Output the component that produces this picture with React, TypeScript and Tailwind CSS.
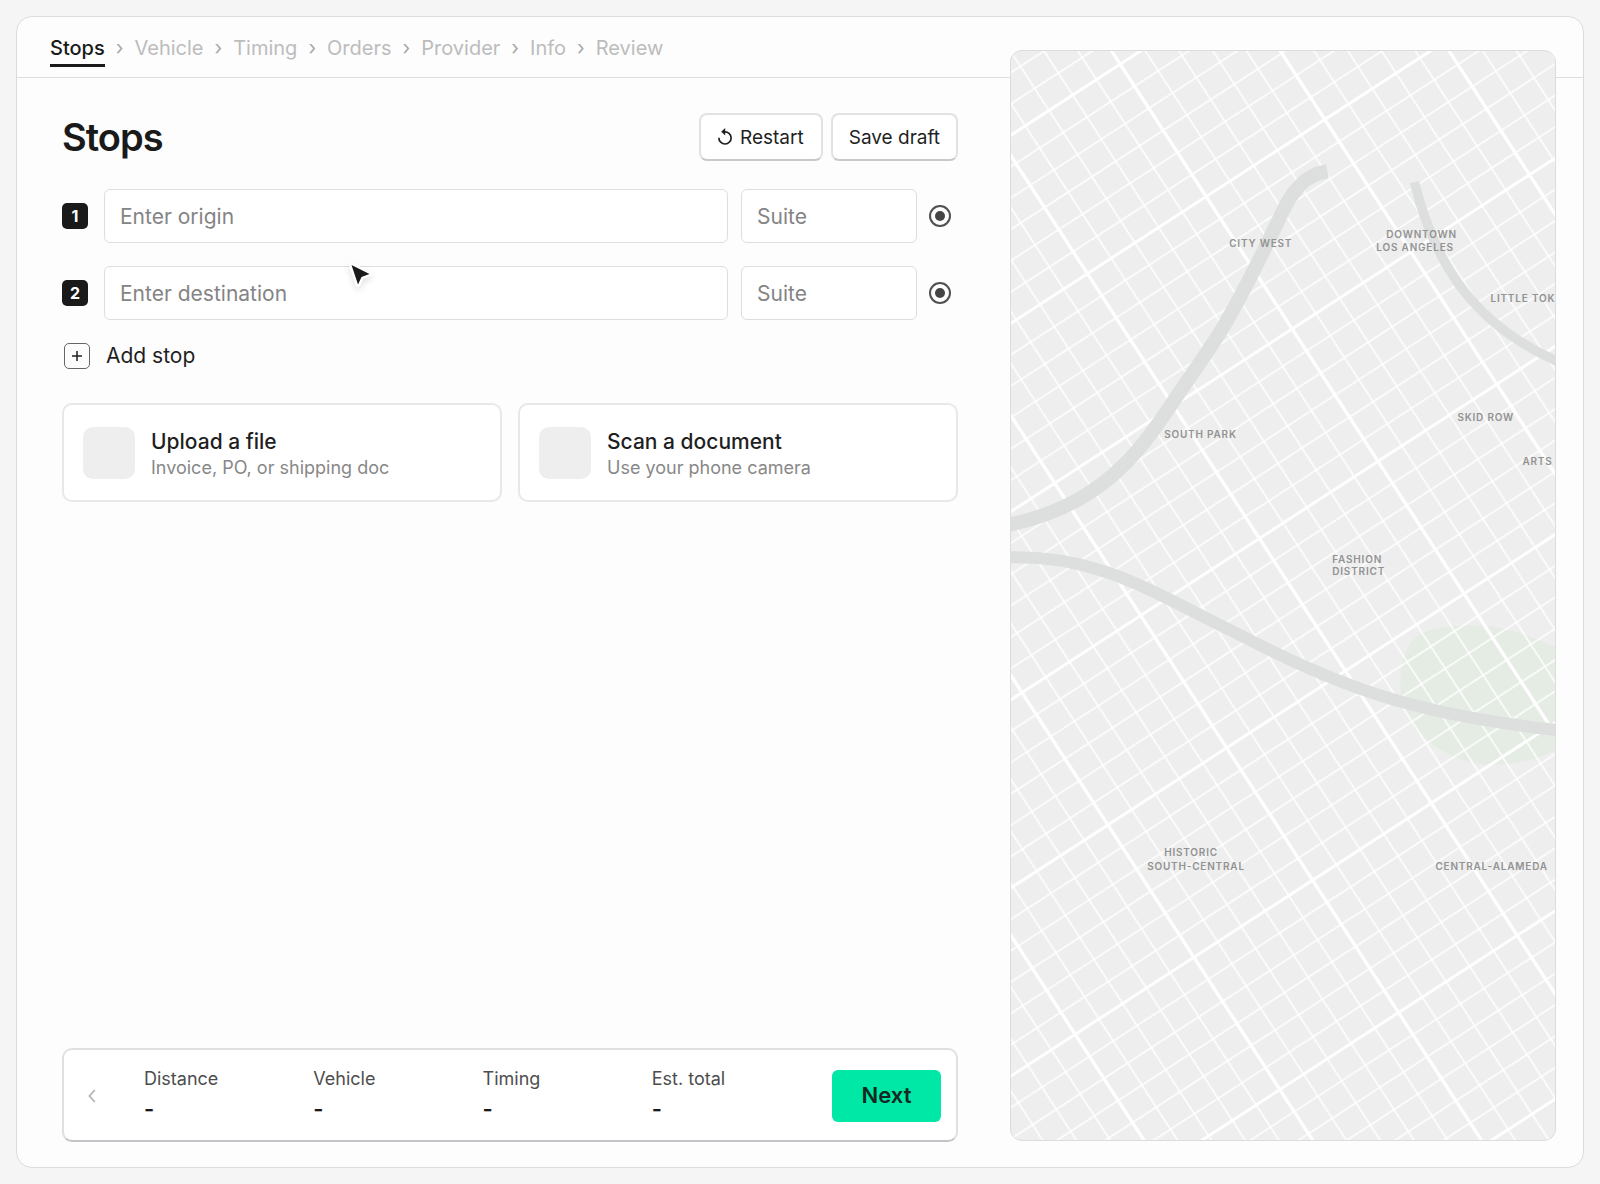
import { Fragment } from "react";
import clsx from "clsx";

const steps = ["Stops", "Vehicle", "Timing", "Orders", "Provider", "Info", "Review"];

const stops = [
  { id: "origin", placeholder: "Enter origin" },
  { id: "destination", placeholder: "Enter destination" },
];

const importOptions = [
  { title: "Upload a file", hint: "Invoice, PO, or shipping doc" },
  { title: "Scan a document", hint: "Use your phone camera" },
];

const summary = ["Distance", "Vehicle", "Timing", "Est. total"];

const districts = [
  { x: 218, y: 196, name: "CITY WEST" },
  { x: 375, y: 187, name: "DOWNTOWN" },
  { x: 365, y: 200, name: "LOS ANGELES" },
  { x: 479, y: 251, name: "LITTLE TOK" },
  { x: 446, y: 370, name: "SKID ROW" },
  { x: 153, y: 387, name: "SOUTH PARK" },
  { x: 511, y: 414, name: "ARTS" },
  { x: 321, y: 512, name: "FASHION" },
  { x: 321, y: 524, name: "DISTRICT" },
  { x: 153, y: 804, name: "HISTORIC" },
  { x: 136, y: 818, name: "SOUTH-CENTRAL" },
  { x: 424, y: 818, name: "CENTRAL-ALAMEDA" },
];

// every 5th avenue and every 6th street is a wide one
const avenues = Array.from({ length: 39 }, (_, i) => ({
  at: 84.3 + (i - 25) * 28.28,
  wide: i % 5 === 0,
}));
const streets = Array.from({ length: 49 }, (_, i) => ({
  at: 70.5 + (i - 6) * 26.28,
  wide: i % 6 === 0,
}));

const Steps = () => (
  <nav aria-label="Steps">
    <ol className="flex items-center gap-[11px] text-xl leading-6 text-[#bcbcbc]">
      {steps.map((step, i) => (
        <Fragment key={step}>
          {i > 0 && (
            <li aria-hidden="true" className="text-[#a8a8a8]">
              ›
            </li>
          )}
          <li>
            <a
              href={`#${step.toLowerCase()}`}
              className={clsx(
                "block border-b-3 pt-2 pb-1",
                i === 0
                  ? "border-[#1a1a1a] font-medium text-[#1a1a1a]"
                  : "border-transparent"
              )}
            >
              {step}
            </a>
          </li>
        </Fragment>
      ))}
    </ol>
  </nav>
);

const actionButton =
  "h-12 rounded-lg border-2 border-[#e2e2e2] border-b-[#c9c9c9] bg-white pt-0.5 text-[19px] leading-6 text-[#1f1f1f]";

const StopRow = ({
  id,
  index,
  placeholder,
}: {
  id: string;
  index: number;
  placeholder: string;
}) => (
  <div className="flex items-center pr-[7px]">
    <label
      htmlFor={id}
      className="flex size-[26px] items-center justify-center rounded-[5px] bg-[#1a1a1a] text-base leading-6 font-bold text-white"
    >
      {index}
    </label>
    <input
      id={id}
      type="text"
      placeholder={placeholder}
      className="ml-4 h-[54px] min-w-0 flex-1 rounded-md border border-[#dedede] bg-white px-[15px] text-[21px] placeholder:text-[#848484]"
    />
    <input
      type="text"
      aria-label={`Suite for stop ${index}`}
      placeholder="Suite"
      className="ml-[13px] h-[54px] w-44 rounded-md border border-[#dedede] bg-white px-[15px] text-[21px] placeholder:text-[#848484]"
    />
    <input
      type="radio"
      name={`pin-${id}`}
      aria-label={`Pin stop ${index} on the map`}
      defaultChecked
      className="ml-3 size-[22px] appearance-none rounded-full border-2 border-[#505050] bg-[#444] bg-clip-content p-1"
    />
  </div>
);

const StreetMap = () => (
  <svg
    viewBox="0 0 544 1088"
    preserveAspectRatio="xMinYMin slice"
    className="absolute inset-0 h-full w-full"
    role="img"
    aria-label="Map of Los Angeles"
  >
    <path
      d="M389 635C388 600 402 583 418 579C440 573 470 572 490 577C515 582 540 592 560 605V690C530 708 500 716 465 712C425 704 390 675 389 635Z"
      fill="#e4ece4"
    />
    <g transform="rotate(-33)" stroke="#fff">
      {avenues.map(({ at, wide }) => (
        <line
          key={at}
          x1={at}
          x2={at}
          y1={-10}
          y2={1230}
          strokeWidth={wide ? 3.4 : 2}
          opacity={wide ? 0.95 : 0.75}
        />
      ))}
      {streets.map(({ at, wide }) => (
        <line
          key={at}
          x1={-620}
          x2={480}
          y1={at}
          y2={at}
          strokeWidth={wide ? 3 : 2}
          opacity={wide ? 0.95 : 0.75}
        />
      ))}
    </g>
    <g fill="none" stroke="#dcdfde">
      <path
        d="M-6 474C96 455 135 390 163 349C185 316 202 294 216 269C236 234 250 205 264 176C276 150 280 143 289 134C297 125 306 122 316 120"
        strokeWidth="14"
      />
      <path d="M-6 506C85 502 140 540 218 578C330 636 400 663 550 679" strokeWidth="12" />
      <path d="M403 131C424 216 465 275 548 311" strokeWidth="9.6" />
    </g>
    <g fill="#929292" fontSize="10" fontWeight="600" className="tracking-[0.08em]">
      {districts.map(({ x, y, name }) => (
        <text key={name} x={x} y={y}>
          {name}
        </text>
      ))}
    </g>
  </svg>
);

const Cursor = () => (
  <svg
    viewBox="0 0 32 32"
    className="pointer-events-none absolute top-[258px] left-[344px] size-8 drop-shadow-md"
    aria-hidden="true"
  >
    <path
      d="M7.500 7L25.500 16L17.500 19L14 26.500Z"
      fill="#1a1a1a"
      stroke="#fff"
      strokeWidth="5"
      strokeLinejoin="round"
      paintOrder="stroke"
    />
  </svg>
);

export default function App() {
  return (
    <div className="relative flex min-h-screen bg-[#f5f5f5] p-4 font-['Inter',sans-serif] text-[#1f1f1f]">
      <div className="grid flex-1 grid-cols-[26fr_15fr] grid-rows-[auto_1fr] rounded-2xl border border-[#dcdcdc] bg-[#fdfdfd]">
        <header className="col-span-2 col-start-1 row-start-1 flex h-[61px] items-start border-b border-[#dedede] px-[33px] pt-[11px]">
          <Steps />
        </header>

        <main className="col-start-1 row-start-2 flex flex-col pt-[35px] pr-[52px] pb-[25px] pl-[45px]">
          <div className="flex items-center justify-between">
            <h1 className="text-[38px] leading-12 font-semibold tracking-tight text-[#1a1a1a]">
              Stops
            </h1>
            <div className="flex gap-2">
              <button
                type="button"
                className={clsx(actionButton, "flex items-center gap-2 px-[17px]")}
              >
                <svg
                  viewBox="0 0 14 18"
                  className="mb-0.5 h-[18px] w-3.5"
                  fill="none"
                  aria-hidden="true"
                >
                  <path
                    d="M6.500 3.800A6.100 6.100 0 1 1 0.900 9.800"
                    stroke="currentColor"
                    strokeWidth="1.700"
                  />
                  <path d="M7.200 0V7.400L3.200 3.800Z" fill="currentColor" />
                </svg>
                Restart
              </button>
              <button type="button" className={clsx(actionButton, "px-4")}>
                Save draft
              </button>
            </div>
          </div>

          <div className="mt-7 flex flex-col gap-[23px]">
            {stops.map((stop, i) => (
              <StopRow key={stop.id} index={i + 1} {...stop} />
            ))}
          </div>

          <button
            type="button"
            className="mt-[23px] ml-0.5 flex items-center gap-4 self-start text-[21px] leading-[26px]"
          >
            <span className="flex size-[26px] items-center justify-center rounded-[5px] border border-[#666]">
              <svg viewBox="0 0 12 12" className="size-3" aria-hidden="true">
                <path d="M6 1V11M1 6H11" stroke="currentColor" strokeWidth="1.500" />
              </svg>
            </span>
            Add stop
          </button>

          <div className="mt-[34px] grid grid-cols-2 gap-4">
            {importOptions.map(({ title, hint }) => (
              <button
                key={title}
                type="button"
                className="flex h-[99px] items-center gap-4 rounded-[10px] border-2 border-[#e8e8e8] bg-white px-[19px] text-left"
              >
                <span className="size-[52px] shrink-0 rounded-[10px] bg-[#eee]" />
                <span className="pt-1">
                  <span className="block text-[21px] leading-[26px] font-medium">{title}</span>
                  <span className="block text-lg leading-[26px] text-[#888]">{hint}</span>
                </span>
              </button>
            ))}
          </div>

          <footer className="mt-auto flex h-[94px] items-center rounded-[10px] border-2 border-[#e0e0e0] border-b-[#c4c4c8] bg-white pt-px pr-[15px] pl-6">
            <button type="button" aria-label="Back" className="w-14 text-left text-[#b4b4b4]">
              <svg viewBox="0 0 8 14" className="h-3.5 w-2" fill="none" aria-hidden="true">
                <path d="M6.800 1L1.500 7L6.800 13" stroke="currentColor" strokeWidth="1.800" />
              </svg>
            </button>
            <dl className="mr-[11px] grid flex-1 grid-cols-4 pb-1">
              {summary.map((label) => (
                <div key={label}>
                  <dt className="text-lg leading-[30px] text-[#4d4d4d]">{label}</dt>
                  <dd className="text-[22px] leading-[30px] font-semibold text-[#1a1a1a]">-</dd>
                </div>
              ))}
            </dl>
            <button
              type="button"
              className="h-[52px] w-[109px] rounded-md bg-[#00e8a5] text-[22px] font-semibold text-[#14291f]"
            >
              Next
            </button>
          </footer>
        </main>

        <aside className="col-start-2 row-span-2 row-start-1 pt-[33px] pr-[27px] pb-[26px]">
          <div className="relative h-full overflow-hidden rounded-xl border border-[#dcdcdc] bg-[#eeeeee]">
            <StreetMap />
          </div>
        </aside>
      </div>
      <Cursor />
    </div>
  );
}
